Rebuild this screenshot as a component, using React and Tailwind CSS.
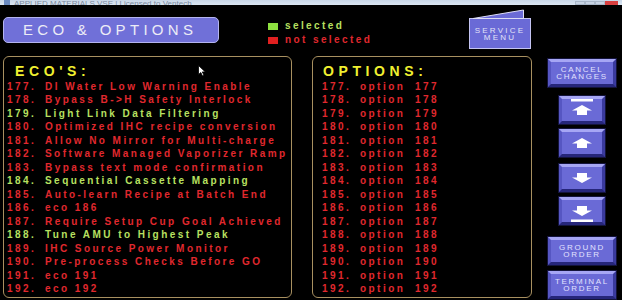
import React from "react";

const RED = "text-[#e0282e]";
const GRN = "text-[#b8e060]";

const ecos = [
  ["177.", "DI Water Low Warning Enable", 0],
  ["178.", "Bypass B->H Safety Interlock", 0],
  ["179.", "Light Link Data Filtering", 1],
  ["180.", "Optimized IHC recipe conversion", 0],
  ["181.", "Allow No Mirror for Multi-charge", 0],
  ["182.", "Software Managed Vaporizer Ramp", 0],
  ["183.", "Bypass text mode confirmation", 0],
  ["184.", "Sequential Cassette Mapping", 1],
  ["185.", "Auto-learn Recipe at Batch End", 0],
  ["186.", "eco 186", 0],
  ["187.", "Require Setup Cup Goal Achieved", 0],
  ["188.", "Tune AMU to Highest Peak", 1],
  ["189.", "IHC Source Power Monitor", 0],
  ["190.", "Pre-process Checks Before GO", 0],
  ["191.", "eco 191", 0],
  ["192.", "eco 192", 0],
];

const options = Array.from({ length: 16 }, (_, i) => 177 + i);

function Bevel({ className, children }) {
  return (
    <div className={`box-border border border-[#14143c] ${className}`}>
      <div className="box-border h-full w-full border-[3px] border-t-[#a6a6f4] border-l-[#5656c2] border-r-[#3a3a9e] border-b-[#26267a] bg-[#6a6ad6] flex flex-col items-center justify-center text-[8px] leading-[7.5px] tracking-[1.7px] text-[#e2e2ff]">
        {children}
      </div>
    </div>
  );
}

function Arrow({ dir, bar }) {
  const up = "12,6 22,11.5 17,11.5 17,16 7,16 7,11.5 2,11.5";
  const down = "12,16 22,10.5 17,10.5 17,6 7,6 7,10.5 2,10.5";
  return (
    <svg width="24" height="22" viewBox="0 0 24 22">
      {bar === "top" && <rect x="1" y="0" width="22" height="2.5" fill="#fff" />}
      {bar === "bottom" && <rect x="1" y="19.5" width="22" height="2.5" fill="#fff" />}
      <polygon points={dir === "up" ? up : down} fill="#fff" />
    </svg>
  );
}

export default function App() {
  return (
    <div
      className="relative w-[622px] h-[300px] bg-black overflow-hidden flex flex-col"
      style={{ fontFamily: '"Liberation Sans", Arial, sans-serif' }}
    >
      {/* window title bar */}
      <div className="h-[5px] shrink-0 bg-gradient-to-b from-[#c9d7e8] to-[#dbe6f2] flex items-end overflow-hidden relative">
        <div className="ml-[4px] w-[6px] h-[5px] bg-[#6a8ac0]" />
        <div className="ml-[4px] text-[8px] leading-[8px] text-[#7a8aa0] whitespace-nowrap translate-y-[3px]">
          APPLIED MATERIALS VSE | Licensed to Ventech
        </div>
        <div className="ml-auto flex items-end h-[5px]">
          <div className="w-[10px] h-[4px] bg-[#c7d3e3] border border-[#a9b7c8]" />
          <div className="w-[10px] h-[4px] bg-[#c7d3e3] border border-[#a9b7c8]" />
          <div className="w-[10px] h-[4px] bg-[#c7d3e3] border border-[#a9b7c8]" />
          <div className="w-[13px] h-[4px] bg-[#d84040] mr-[4px]" />
        </div>
      </div>

      {/* header */}
      <div className="h-[51px] shrink-0 flex items-start">
        <div className="ml-[3px] mt-[12px] w-[216px] h-[26px] rounded-[5px] bg-[#7070d8] border border-[#b4b4f0] flex items-center pl-[19px] text-[15px] tracking-[4.3px] text-[#ececf6] whitespace-nowrap">
          ECO &amp; OPTIONS
        </div>
        <div className="ml-[49px] mt-[14px] w-[120px] flex flex-col text-[10px] font-bold tracking-[2.4px] leading-[14px] whitespace-nowrap">
          <div className="flex items-center">
            <div className="w-[10px] h-[7px] bg-[#8ee040]" />
            <span className={`ml-[7px] ${GRN}`}>selected</span>
          </div>
          <div className="flex items-center">
            <div className="w-[10px] h-[7px] bg-[#e02020]" />
            <span className={`ml-[7px] ${RED}`}>not selected</span>
          </div>
        </div>
        <div className="relative ml-[81px] mt-[4px] w-[62px] h-[40px]">
          <svg className="absolute left-0 top-0" width="62" height="40" viewBox="0 0 62 40">
            <rect x="0.5" y="9.5" width="61" height="30" fill="#6a6ad6" stroke="#c4c4f2" strokeWidth="1" />
            <polygon points="4,9.5 54.5,1 54.5,9.5" fill="#6a6ad6" stroke="#dcdcf6" strokeWidth="1" />
          </svg>
          <div className="absolute left-0 right-0 top-[10px] bottom-0 flex flex-col items-center justify-center text-[8px] leading-[7.5px] tracking-[2.2px] text-[#e2e2f8]">
            <span>SERVICE</span>
            <span>MENU</span>
          </div>
        </div>
      </div>

      {/* main */}
      <div className="flex items-start">
        {/* ECO panel */}
        <div className="ml-[3px] w-[289px] h-[242px] box-border border-[1.5px] border-[#a89060] rounded-[6px] overflow-hidden">
          <div className="pl-[11px] pt-[6px] h-[22px] text-[14px] leading-[16px] font-bold tracking-[4.6px] text-[#f0f030]">
            ECO'S:
          </div>
          <div className="mt-[1px] pl-[3px] text-[10px] font-bold tracking-[2.45px] leading-[13.47px] whitespace-nowrap">
            {ecos.map(([n, t, s]) => (
              <div key={n} className={`flex ${s ? GRN : RED}`}>
                <span className="w-[38px] shrink-0">{n}</span>
                <span>{t}</span>
              </div>
            ))}
          </div>
        </div>

        {/* OPTIONS panel */}
        <div className="ml-[20px] w-[220px] h-[242px] box-border border-[1.5px] border-[#a89060] rounded-[6px] overflow-hidden">
          <div className="pl-[10px] pt-[6px] h-[22px] text-[14px] leading-[16px] font-bold tracking-[4.6px] text-[#f0f030]">
            OPTIONS:
          </div>
          <div className="mt-[1px] pl-[9px] text-[10px] font-bold tracking-[2.45px] leading-[13.47px] whitespace-nowrap">
            {options.map((n) => (
              <div key={n} className={`flex ${RED}`}>
                <span className="w-[38px] shrink-0">{n}.</span>
                <span className="w-[55px] shrink-0">option</span>
                <span>{n}</span>
              </div>
            ))}
          </div>
        </div>

        {/* right column */}
        <div className="ml-[15px] w-[70px] pt-[2px] flex flex-col">
          <Bevel className="w-[70px] h-[30px]">
            <span>CANCEL</span>
            <span>CHANGES</span>
          </Bevel>
          <Bevel className="ml-[11px] mt-[7px] w-[48px] h-[30px]">
            <Arrow dir="up" bar="top" />
          </Bevel>
          <Bevel className="ml-[11px] mt-[3px] w-[48px] h-[30px]">
            <Arrow dir="up" />
          </Bevel>
          <Bevel className="ml-[11px] mt-[5px] w-[48px] h-[30px]">
            <Arrow dir="down" />
          </Bevel>
          <Bevel className="ml-[11px] mt-[3px] w-[48px] h-[30px]">
            <Arrow dir="down" bar="bottom" />
          </Bevel>
          <Bevel className="mt-[10px] w-[70px] h-[30px]">
            <span>GROUND</span>
            <span>ORDER</span>
          </Bevel>
          <Bevel className="mt-[4px] w-[70px] h-[30px]">
            <span>TERMINAL</span>
            <span>ORDER</span>
          </Bevel>
        </div>
      </div>

      {/* mouse cursor */}
      <svg className="absolute left-[198px] top-[65px]" width="8" height="12" viewBox="0 0 8 12">
        <polygon points="0.5,0.5 0.5,9.5 2.8,7.5 4.5,11 6,10.3 4.3,6.9 7.3,6.9" fill="#fff" stroke="#000" strokeWidth="0.8" />
      </svg>
    </div>
  );
}
